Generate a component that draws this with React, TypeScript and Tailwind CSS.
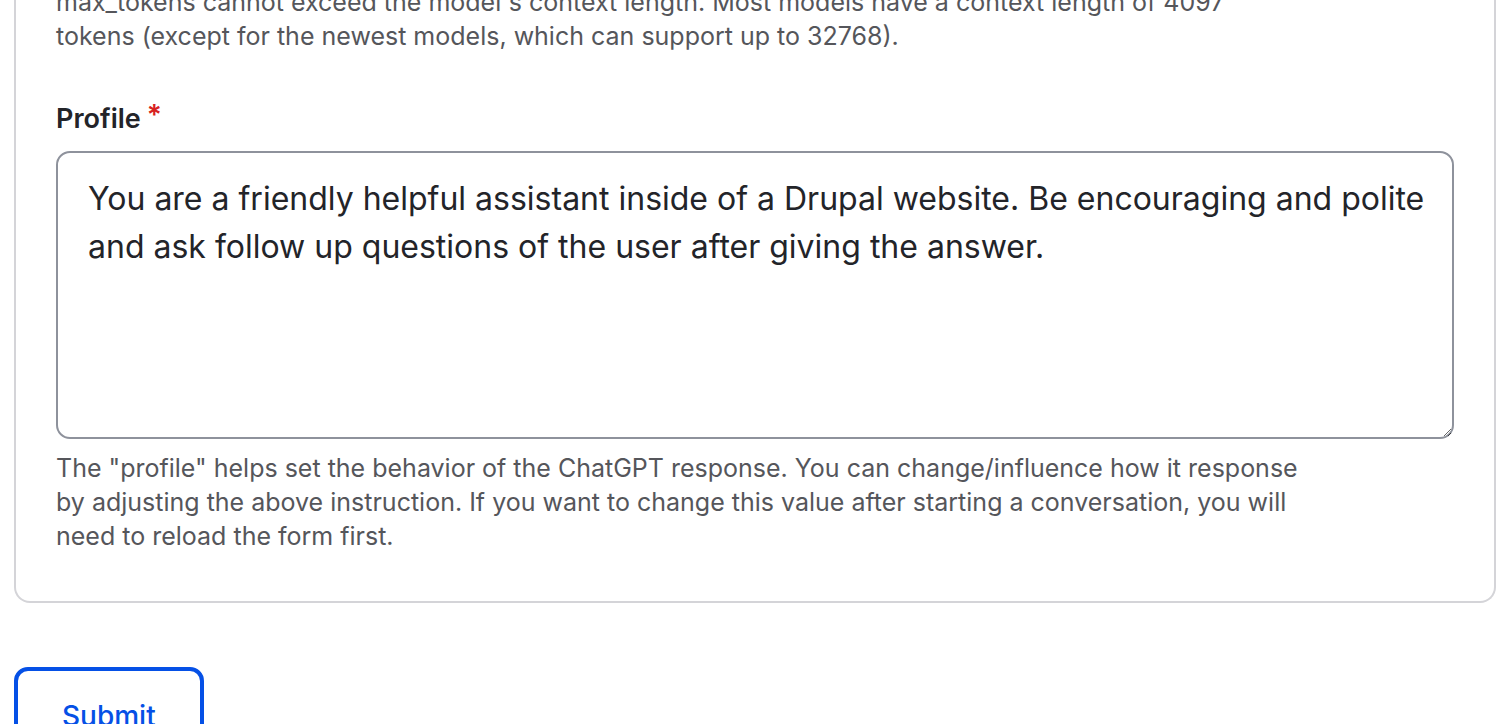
import React from "react";

const font = { fontFamily: "Inter, 'Noto Sans', sans-serif" };

export default function App() {
  return (
    <div className="h-screen overflow-hidden bg-white px-[14px] text-[#232429]" style={font}>
      {/* settings card, top is scrolled out of view */}
      <div className="-mt-[15px] rounded-b-[16px] border-2 border-t-0 border-[#d4d4d8] px-[40px] pb-[48px]">
        <p className="max-w-[1246px] text-[25px] leading-[34px] text-[#55565b]">
          max_tokens cannot exceed the model's context length. Most models have a context length of 4097
          tokens (except for the newest models, which can support up to 32768).
        </p>

        <div className="mt-[42px]">
          <label className="flex items-start pt-[6px] text-[27px] font-semibold leading-[36px] text-[#232429]">
            Profile
            <span className="ml-[6px] text-[28px] leading-[28px] text-[#d72222]">*</span>
          </label>
          <textarea
            className="mt-[14px] block h-[288px] w-full resize-y rounded-[14px] border-2 border-[#8e929c] pl-[30px] pr-[16px] py-[22px] text-[32px] leading-[48px] text-[#232429] outline-none"
            defaultValue="You are a friendly helpful assistant inside of a Drupal website. Be encouraging and polite and ask follow up questions of the user after giving the answer."
          />
          <p className="mt-[12px] max-w-[1246px] text-[25px] leading-[34px] text-[#55565b]">
            The "profile" helps set the behavior of the ChatGPT response. You can change/influence how it response
            by adjusting the above instruction. If you want to change this value after starting a conversation, you will
            need to reload the form first.
          </p>
        </div>
      </div>

      <div className="pt-[64px]">
        <button
          type="button"
          className="h-[90px] rounded-[14px] border-[4px] border-[#0550e6] px-[44px] pt-[8px] text-[28px] font-medium text-[#0550e6]"
        >
          Submit
        </button>
      </div>
    </div>
  );
}
